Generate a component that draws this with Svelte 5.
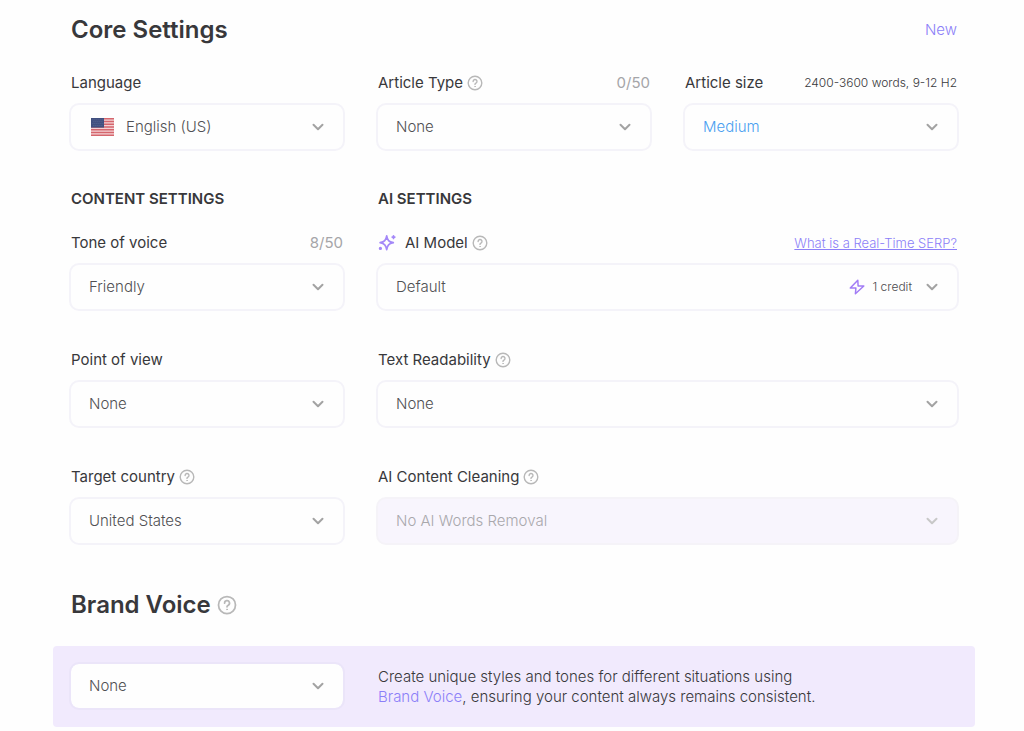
<script lang="ts">
  let language = 'English (US)';
  let articleType = 'None';
  let articleSize = 'Medium';
  let tone = 'Friendly';
  let aiModel = 'Default';
  let pointOfView = 'None';
  let readability = 'None';
  let country = 'United States';
  let cleaning = 'No AI Words Removal';
  let brandVoice = 'None';
</script>

{#snippet help(topic: string, large = false)}
  <button type="button" class="help" class:large aria-label={'Help: ' + topic}>
    <svg viewBox="0 0 16 16" fill="none" stroke="currentColor" stroke-linecap="round" stroke-linejoin="round">
      <circle cx="8" cy="8" r="6.8" stroke-width="1.4" />
      <path d="M6.1 6.5a1.95 1.95 0 1 1 2.9 1.65c-.7.4-1 .7-1 1.25" stroke-width="1.4" />
      <circle cx="8" cy="11.5" r=".35" stroke-width=".8" />
    </svg>
  </button>
{/snippet}

{#snippet chevron()}
  <svg class="chevron" viewBox="0 0 12 8" fill="none" stroke="currentColor" stroke-width="2" stroke-linecap="round" stroke-linejoin="round">
    <path d="M1.5 1.7 6 6.2l4.5-4.5" />
  </svg>
{/snippet}

<main>
  <header class="title-row inset">
    <h1>Core Settings</h1>
    <a href="#new">New</a>
  </header>

  <div class="grid">
    <div class="field">
      <div class="label-row">
        <label for="language">Language</label>
      </div>
      <div class="control">
        <select id="language" class="with-flag" bind:value={language}>
          <option>English (US)</option>
        </select>
        <svg class="flag" viewBox="0 0 23 18">
          <rect width="23" height="18" fill="#f3d3d6" />
          <path d="M0 .7h23M0 3.5h23M0 6.2h23M0 9h23M0 11.8h23M0 14.5h23M0 17.3h23" stroke="#d5666d" stroke-width="1.5" />
          <rect width="13" height="9.6" fill="#41507f" />
          <path d="M1.5 1.8h11M2.5 3.7h9M1.5 5.6h11M2.5 7.5h9" stroke="#6c7aa3" stroke-width=".7" stroke-dasharray=".8 1.2" />
        </svg>
        {@render chevron()}
      </div>
    </div>

    <div class="field">
      <div class="label-row">
        <label for="article-type">Article Type</label>
        {@render help('Article Type')}
        <span class="count">0/50</span>
      </div>
      <div class="control">
        <select id="article-type" bind:value={articleType}>
          <option>None</option>
        </select>
        {@render chevron()}
      </div>
    </div>

    <div class="field">
      <div class="label-row">
        <label for="article-size">Article size</label>
        <span class="hint">2400-3600 words, 9-12 H2</span>
      </div>
      <div class="control">
        <select id="article-size" class="blue" bind:value={articleSize}>
          <option>Medium</option>
        </select>
        {@render chevron()}
      </div>
    </div>
  </div>

  <div class="grid headings">
    <h2>Content settings</h2>
    <h2 class="wide">AI settings</h2>
  </div>

  <div class="grid">
    <div class="field">
      <div class="label-row">
        <label for="tone">Tone of voice</label>
        <span class="count">8/50</span>
      </div>
      <div class="control">
        <select id="tone" bind:value={tone}>
          <option>Friendly</option>
        </select>
        {@render chevron()}
      </div>
    </div>

    <div class="field wide">
      <div class="label-row">
        <svg class="sparkle" viewBox="0 0 18 18" fill="none" stroke="currentColor" stroke-width="1.7" stroke-linejoin="round" stroke-linecap="round">
          <path d="M8.7 1.8c.7 4.5 2.1 5.9 6.6 6.9-4.5 1-5.9 2.4-6.6 7-.8-4.6-2.2-6-6.6-7 4.4-1 5.8-2.4 6.6-6.9z" />
          <path d="M15.5 1.8v2.6M14.2 3.1h2.6" />
          <circle cx="2.4" cy="14.4" r=".8" />
        </svg>
        <label for="ai-model">AI Model</label>
        {@render help('AI Model')}
        <a class="serp" href="#serp">What is a Real-Time SERP?</a>
      </div>
      <div class="control">
        <select id="ai-model" bind:value={aiModel}>
          <option>Default</option>
        </select>
        <span class="credit">
          <svg viewBox="0 0 16 16" fill="none" stroke="currentColor" stroke-width="1.5" stroke-linejoin="round">
            <path d="M8.8 1.2 1.3 9h5.6l-.5 5.8L14.8 7H9.1z" />
          </svg>
          1 credit
        </span>
        {@render chevron()}
      </div>
    </div>

    <div class="field">
      <div class="label-row">
        <label for="pov">Point of view</label>
      </div>
      <div class="control">
        <select id="pov" bind:value={pointOfView}>
          <option>None</option>
        </select>
        {@render chevron()}
      </div>
    </div>

    <div class="field wide">
      <div class="label-row">
        <label for="readability">Text Readability</label>
        {@render help('Text Readability')}
      </div>
      <div class="control">
        <select id="readability" bind:value={readability}>
          <option>None</option>
        </select>
        {@render chevron()}
      </div>
    </div>

    <div class="field">
      <div class="label-row">
        <label for="country">Target country</label>
        {@render help('Target country')}
      </div>
      <div class="control">
        <select id="country" bind:value={country}>
          <option>United States</option>
        </select>
        {@render chevron()}
      </div>
    </div>

    <div class="field wide">
      <div class="label-row">
        <label for="cleaning">AI Content Cleaning</label>
        {@render help('AI Content Cleaning')}
      </div>
      <div class="control disabled">
        <select id="cleaning" bind:value={cleaning} disabled>
          <option>No AI Words Removal</option>
        </select>
        {@render chevron()}
      </div>
    </div>
  </div>

  <div class="title-row brand-title inset">
    <h1>Brand Voice</h1>
    {@render help('Brand Voice', true)}
  </div>

  <section class="brand">
    <div class="control">
      <select aria-label="Brand Voice" bind:value={brandVoice}>
        <option>None</option>
      </select>
      {@render chevron()}
    </div>
    <p class="wide">
      Create unique styles and tones for different situations using<br />
      <a href="#brand-voice">Brand Voice</a>, ensuring your content always remains consistent.
    </p>
  </section>
</main>

<style>
  :global(body) {
    margin: 0;
    background: #fefefe;
  }

  main {
    padding: 14px 49px 4px 53px;
    font-family: Inter, "Liberation Sans", sans-serif;
    font-size: 15px;
    line-height: 20px;
    color: #38383b;
  }

  a {
    color: #8c7ff8;
    font-weight: 300;
    text-decoration: none;
  }

  h1 {
    margin: 0;
    font-size: 24px;
    line-height: 32px;
    font-weight: 600;
  }

  h2 {
    margin: 0;
    padding: 0 2px;
    font-size: 15px;
    line-height: 20px;
    font-weight: 600;
    text-transform: uppercase;
  }

  .title-row {
    display: flex;
    align-items: center;
    margin-bottom: 27px;
  }

  .title-row > a {
    margin-left: auto;
    line-height: 22px;
  }

  .inset {
    padding: 0 18px;
  }

  .grid,
  .brand {
    display: grid;
    grid-template-columns: repeat(3, minmax(0, 1fr));
    gap: 39px 31px;
    padding: 0 16px;
  }

  .headings {
    margin: 38px 0 24px;
  }

  .wide {
    grid-column: span 2;
  }

  .label-row {
    display: flex;
    align-items: center;
    padding: 0 2px;
    margin-bottom: 10px;
  }

  .count,
  .hint,
  .serp {
    margin-left: auto;
  }

  .count {
    color: #a5a5a8;
  }

  .hint {
    font-size: 12px;
    font-weight: 300;
  }

  .serp {
    font-size: 13px;
    text-decoration: underline;
  }

  .help {
    width: 16px;
    height: 16px;
    margin-left: 4px;
    padding: 0;
    border: 0;
    background: none;
    color: #b8b8b8;
    cursor: pointer;
  }

  .help.large {
    width: 20px;
    height: 20px;
    margin-left: 6px;
  }

  .help svg {
    display: block;
  }

  .sparkle {
    width: 18px;
    height: 18px;
    margin-right: 9px;
    color: #a488f8;
  }

  .control {
    position: relative;
    color: #a3a3a3;
  }

  select {
    display: block;
    box-sizing: border-box;
    width: 100%;
    height: 48px;
    padding: 0 44px 1px 18px;
    border: 2px solid #f4f3f9;
    border-radius: 10px;
    appearance: none;
    background: #fefefe;
    color: #505053;
    font-family: inherit;
    font-size: 15px;
    font-weight: 300;
    cursor: pointer;
  }

  select.with-flag {
    padding-left: 55px;
  }

  select.blue {
    color: #4a9ff0;
  }

  .chevron,
  .flag,
  .credit {
    position: absolute;
    pointer-events: none;
  }

  .chevron {
    top: 20px;
    right: 21px;
    width: 12px;
    height: 8px;
  }

  .flag {
    top: 15px;
    left: 22px;
    width: 23px;
    height: 18px;
  }

  .credit {
    top: 14px;
    right: 47px;
    display: flex;
    align-items: center;
    gap: 8px;
    color: #4a4a4d;
    font-size: 12px;
    font-weight: 300;
  }

  .credit svg {
    width: 16px;
    height: 16px;
    color: #a27cf5;
  }

  .disabled {
    color: #c8c8c8;
  }

  .disabled select {
    background: #f8f5fd;
    border-color: #f5f3f8;
    color: #a9a8ac;
    opacity: 1;
    cursor: default;
  }

  .brand-title {
    margin: 44px 0 25px;
  }

  .brand {
    align-items: center;
    padding-top: 16px;
    padding-bottom: 17px;
    border-radius: 4px;
    background: #f1eafd;
  }

  .brand select {
    border-color: #ebe5f9;
    background-clip: padding-box;
  }

  .brand p {
    margin: 0;
    padding: 1px 2px 0;
    font-weight: 300;
  }
</style>
